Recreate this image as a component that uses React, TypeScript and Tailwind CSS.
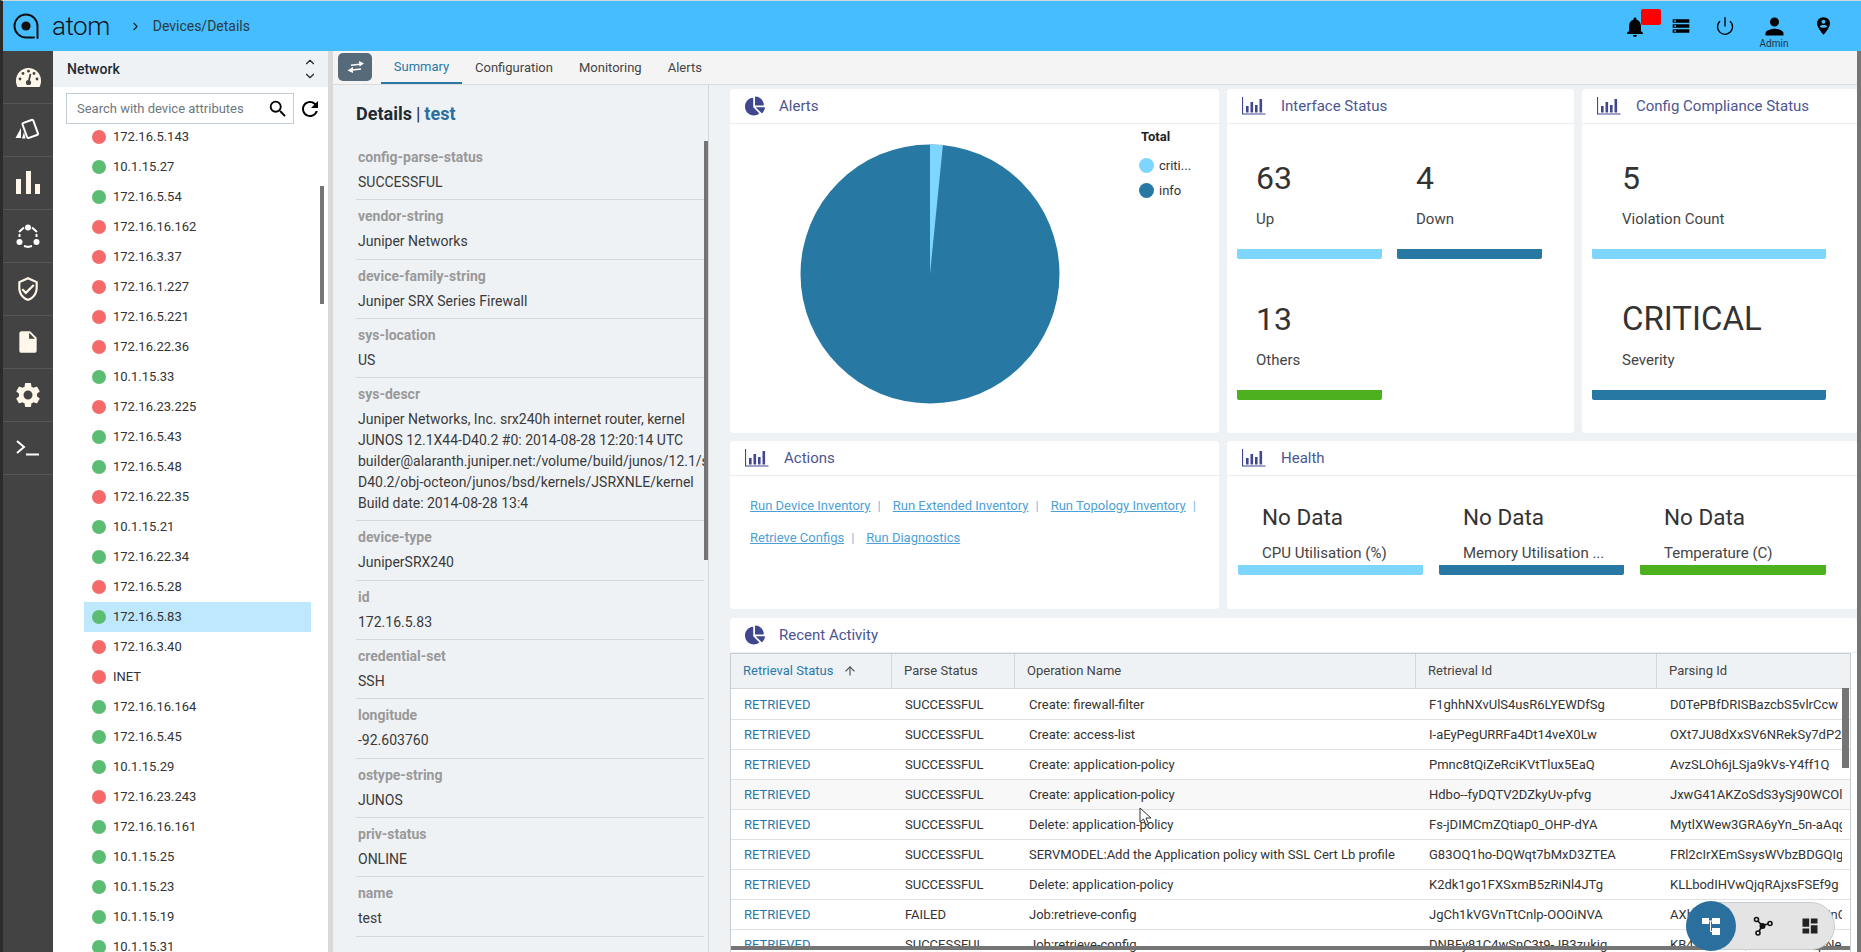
import React from 'react';
import { MdNotifications, MdStorage, MdPerson, MdSearch, MdRefresh, MdInsertDriveFile, MdSettings, MdOutlineVerifiedUser, MdDashboard } from 'react-icons/md';
import { FaChartPie } from 'react-icons/fa';
import { Power, ChevronUp, ChevronDown, ChevronRight, ArrowUp } from 'lucide-react';

const devices: [string, 'r' | 'g'][] = [
  ['172.16.5.143', 'r'], ['10.1.15.27', 'g'], ['172.16.5.54', 'g'], ['172.16.16.162', 'r'], ['172.16.3.37', 'r'],
  ['172.16.1.227', 'r'], ['172.16.5.221', 'r'], ['172.16.22.36', 'r'], ['10.1.15.33', 'g'], ['172.16.23.225', 'r'],
  ['172.16.5.43', 'g'], ['172.16.5.48', 'g'], ['172.16.22.35', 'r'], ['10.1.15.21', 'g'], ['172.16.22.34', 'g'],
  ['172.16.5.28', 'r'], ['172.16.5.83', 'g'], ['172.16.3.40', 'r'], ['INET', 'r'], ['172.16.16.164', 'g'],
  ['172.16.5.45', 'g'], ['10.1.15.29', 'g'], ['172.16.23.243', 'r'], ['172.16.16.161', 'g'], ['10.1.15.25', 'g'],
  ['10.1.15.23', 'g'], ['10.1.15.19', 'g'], ['10.1.15.31', 'g'],
];

const fields: [string, string[]][] = [
  ['config-parse-status', ['SUCCESSFUL']],
  ['vendor-string', ['Juniper Networks']],
  ['device-family-string', ['Juniper SRX Series Firewall']],
  ['sys-location', ['US']],
  ['sys-descr', [
    'Juniper Networks, Inc. srx240h internet router, kernel',
    'JUNOS 12.1X44-D40.2 #0: 2014-08-28 12:20:14 UTC',
    'builder@alaranth.juniper.net:/volume/build/junos/12.1/s',
    'D40.2/obj-octeon/junos/bsd/kernels/JSRXNLE/kernel',
    'Build date: 2014-08-28 13:4',
  ]],
  ['device-type', ['JuniperSRX240']],
  ['id', ['172.16.5.83']],
  ['credential-set', ['SSH']],
  ['longitude', ['-92.603760']],
  ['ostype-string', ['JUNOS']],
  ['priv-status', ['ONLINE']],
  ['name', ['test']],
];

const activity = [
  ['SUCCESSFUL', 'Create: firewall-filter', 'F1ghhNXvUlS4usR6LYEWDfSg', 'D0TePBfDRISBazcbS5vlrCcw'],
  ['SUCCESSFUL', 'Create: access-list', 'I-aEyPegURRFa4Dt14veX0Lw', 'OXt7JU8dXxSV6NRekSy7dP2Q'],
  ['SUCCESSFUL', 'Create: application-policy', 'Pmnc8tQiZeRciKVtTlux5EaQ', 'AvzSLOh6jLSja9kVs-Y4ff1Q'],
  ['SUCCESSFUL', 'Create: application-policy', 'Hdbo--fyDQTV2DZkyUv-pfvg', 'JxwG41AKZoSdS3ySj90WCOlA'],
  ['SUCCESSFUL', 'Delete: application-policy', 'Fs-jDIMCmZQtiap0_OHP-dYA', 'MytlXWew3GRA6yYn_5n-aAqg'],
  ['SUCCESSFUL', 'SERVMODEL:Add the Application policy with SSL Cert Lb profile', 'G83OQ1ho-DQWqt7bMxD3ZTEA', 'FRl2cIrXEmSsysWVbzBDGQIg'],
  ['SUCCESSFUL', 'Delete: application-policy', 'K2dk1go1FXSxmB5zRiNl4JTg', 'KLLbodIHVwQjqRAjxsFSEf9g'],
  ['FAILED', 'Job:retrieve-config', 'JgCh1kVGVnTtCnlp-OOOiNVA', 'AXbJk2mQwPz7YtRvLs0eHnQ'],
  ['SUCCESSFUL', 'Job:retrieve-config', 'DNBFy81C4wSnC3t9-JB3zukig', 'KB4sTfLm9QxVdA2oWcYpNeA'],
];

// atom logo mark
const Logo = () => (
  <svg width="28" height="28" viewBox="0 0 28 28" fill="none" stroke="#111" strokeWidth="2">
    <path d="M25.5 26V14A11.5 11.5 0 1 0 14 25.5h8" strokeLinecap="round" />
    <circle cx="14" cy="14" r="4.6" fill="#111" stroke="none" />
  </svg>
);

const GaugeIcon = () => (
  <svg width="25" height="19" viewBox="0 0 25 19">
    <path d="M12.5 0C5.6 0 0 5.6 0 12.5 0 15 .5 17 1.5 19H23.5C24.5 17 25 15 25 12.5 25 5.6 19.4 0 12.5 0Z" fill="#fff8ea" />
    <g fill="#434343">
      <circle cx="4" cy="11" r="1.4" />
      <circle cx="7" cy="5.5" r="1.4" />
      <circle cx="12.5" cy="3.2" r="1.4" />
      <circle cx="18" cy="5.5" r="1.4" />
      <circle cx="21" cy="11" r="1.4" />
      <circle cx="12.5" cy="14.5" r="2.6" />
    </g>
    <path d="M14.5 6 L12.5 14" stroke="#434343" strokeWidth="1.8" />
  </svg>
);

const CardsIcon = () => (
  <svg width="26" height="24" viewBox="0 0 26 24" fill="none">
    <path d="M0.5 20 L6 10 L6 20 Z" fill="#fff" />
    <path d="M7 20.5 L9 14 L10.5 20.5 Z" fill="#fff" />
    <rect x="9.5" y="3" width="11.5" height="16" rx="1.5" transform="rotate(-20 15 11)" fill="#434343" stroke="#fff" strokeWidth="2" />
  </svg>
);

const BarsIcon = () => (
  <svg width="24" height="24" viewBox="0 0 24 24" fill="#fff8ea">
    <rect x="0" y="8" width="5" height="15" />
    <rect x="10" y="0" width="5" height="23" />
    <rect x="19" y="13" width="5" height="10" />
  </svg>
);

const NodesIcon = () => (
  <svg width="24" height="24" viewBox="0 0 24 24" fill="#fff">
    <circle cx="12" cy="3.5" r="3" />
    <circle cx="3.5" cy="18" r="3" />
    <circle cx="20.5" cy="18" r="3" />
    <path d="M3 8 L8 3.5 M21 8 L16 3.5 M8 22 L12 23 L16 22 M3.5 10v3 M20.5 10v3" stroke="#fff" strokeWidth="2" fill="none" />
  </svg>
);

const TerminalIcon = () => (
  <svg width="24" height="18" viewBox="0 0 24 18" fill="none" stroke="#fff" strokeWidth="2">
    <path d="M1 2 L8 8 L1 14" />
    <path d="M10 15.5 H23" />
  </svg>
);

const ChartIcon = () => (
  <svg width="24" height="18" viewBox="0 0 24 18" fill="#3f478f">
    <path d="M0.5 0 V17 H23.5" fill="none" stroke="#3f478f" strokeWidth="1.2" />
    <rect x="4" y="9" width="2.6" height="6.5" />
    <rect x="8.5" y="5" width="2.6" height="10.5" />
    <rect x="13" y="8" width="2.6" height="7.5" />
    <rect x="17.5" y="2" width="2.6" height="13.5" />
  </svg>
);

const PieIcon = () => <FaChartPie className="text-[#3f478f]" size={20} />;

const PinIcon = () => (
  <svg width="13" height="18" viewBox="0 0 14 19">
    <path d="M7 0C3 0 0 3 0 6.8 0 11.5 7 19 7 19s7-7.5 7-12.2C14 3 11 0 7 0z" fill="#000" />
    <circle cx="7" cy="5" r="2.2" fill="#45bdff" />
    <path d="M3 10 C4 8 10 8 11 10 C10 12 4 12 3 10z" fill="#45bdff" />
  </svg>
);

const TreeIcon = () => (
  <svg width="18" height="17" viewBox="0 0 18 17" fill="#fff">
    <rect x="0" y="0" width="7" height="6" />
    <rect x="10" y="0" width="8" height="6" />
    <rect x="10" y="10" width="8" height="7" />
    <path d="M7 3h3M8.5 3v10.5H10" stroke="#fff" strokeWidth="1" fill="none" />
  </svg>
);

const GraphIcon = () => (
  <svg width="20" height="20" viewBox="0 0 20 20" fill="none" stroke="#111" strokeWidth="1.6">
    <circle cx="3.5" cy="3.5" r="2" />
    <circle cx="17" cy="7.5" r="2" />
    <circle cx="5" cy="17" r="2" />
    <path d="M5 5 L9 9.5 L15 8 M9 10 L6 15.5" />
    <circle cx="9.5" cy="10" r="3" fill="#111" stroke="none" />
  </svg>
);

const SwapIcon = () => (
  <svg width="17" height="12" viewBox="0 0 17 12" fill="#fff">
    <path d="M4 4.2 L13 3.2" stroke="#fff" strokeWidth="1.5" />
    <path d="M12 0 L17 2.5 L12.5 5.5Z" />
    <path d="M14 8 L5 9" stroke="#fff" strokeWidth="1.5" />
    <path d="M6 6 L0.5 9.5 L6 12Z" />
  </svg>
);

const navIcons = [<GaugeIcon />, <CardsIcon />, <BarsIcon />, <NodesIcon />,
  <MdOutlineVerifiedUser className="text-[#fff8ea]" size={26} />,
  <MdInsertDriveFile className="text-[#fff8ea]" size={26} />,
  <MdSettings className="text-[#fff8ea]" size={30} />,
  <TerminalIcon />];

const CardHead = ({ icon, title, pie }: { icon: React.ReactNode; title: string; pie?: boolean }) => (
  <div className={`h-[35px] flex items-center pl-[15px] border-b border-[#eceef1] text-[15px] text-[#4c5590] shrink-0 ${pie ? 'gap-[10px]' : 'gap-[15px]'}`}>
    <span className="w-[24px] flex justify-start">{icon}</span>
    <span>{title}</span>
  </div>
);

const Stat = ({ value, label, bar, big, indent }: { value: string; label: string; bar: string; big?: boolean; indent?: boolean }) => (
  <div className="flex flex-col">
    <div className={`h-[41px] flex items-center text-[#333] ${indent ? 'pl-[30px]' : 'pl-[19px]'} ${big ? 'text-[33px]' : 'text-[32px]'}`}>{value}</div>
    <div className={`mt-[11px] h-[21px] text-[15px] leading-[21px] text-[#444] ${indent ? 'pl-[30px]' : 'pl-[19px]'}`}>{label}</div>
    <div className={`mt-[19px] h-[10px] rounded-b-[2px] ${bar}`} />
  </div>
);

const Health = ({ label, bar }: { label: string; bar: string }) => (
  <div className="flex flex-col">
    <div className="pl-[24px] h-[32px] leading-[32px] mt-[1px] text-[22.5px] text-[#333]">No Data</div>
    <div className="pl-[24px] mt-[10px] h-[20px] leading-[20px] text-[15px] text-[#444] whitespace-nowrap overflow-hidden">{label}</div>
    <div className={`mt-[2px] h-[10px] rounded-b-[2px] ${bar}`} />
  </div>
);

const Link = ({ children, bar }: { children: string; bar?: boolean }) => (
  <span className="whitespace-nowrap">
    <span className="underline text-[#4e9fd6]">{children}</span>
    {bar && <span className="ml-[7px] mr-[12px] text-[#7fb8de]">|</span>}
  </span>
);

export default function App() {
  return (
    <div className="relative w-[1861px] h-[952px] overflow-hidden flex flex-col bg-[#eff2f5] font-['Roboto',sans-serif] text-[14px] text-[#333]">
      {/* top bar */}
      <header className="h-[51px] shrink-0 flex items-center bg-[#45bdff] border-t border-[#cfd8de] border-l-[3px] border-l-[#2c2a2a]">
        <div className="ml-[9px]"><Logo /></div>
        <span className="ml-[12px] text-[26px] leading-none tracking-[-0.5px] text-[#111] font-light">atom</span>
        <ChevronRight size={13} strokeWidth={2} className="ml-[19px] text-[#222]" />
        <span className="ml-[11px] text-[14px] text-[#2b3a44]">Devices/Details</span>
        <div className="ml-auto flex items-center pr-[31px]">
          <div className="relative w-[24px] mt-[1px]">
            <MdNotifications size={24} className="text-black" />
            <span className="absolute left-[18px] top-[-6px] w-[20px] h-[16px] rounded-[2px] bg-[#ff0000]" />
          </div>
          <MdStorage size={20} className="ml-[24px] text-black" />
          <Power size={20} strokeWidth={1.6} className="ml-[24px] text-black" />
          <div className="ml-[24px] w-[30px] flex flex-col items-center pt-[12px]">
            <MdPerson size={27} className="text-black -my-[2px]" />
            <span className="text-[10px] leading-[12px] text-[#1f3340]">Admin</span>
          </div>
          <div className="ml-[28px]"><PinIcon /></div>
        </div>
      </header>

      <div className="flex flex-1 min-h-0">
        {/* icon rail */}
        <nav className="w-[53px] shrink-0 bg-[#434343] border-l-[3px] border-[#2c2a2a] flex flex-col">
          {navIcons.map((ic, i) => (
            <div key={i} className="h-[53px] shrink-0 flex items-center justify-center border-b border-[#555]">{ic}</div>
          ))}
        </nav>

        {/* device tree */}
        <aside className="relative w-[275px] shrink-0 bg-white flex flex-col">
          <div className="h-[36px] shrink-0 bg-[#eff2f5] flex items-center pl-[14px] pr-[11px] text-[14px] font-medium text-[#1f2a33]">
            <span className="flex-1">Network</span>
            <span className="flex flex-col gap-[1px]">
              <ChevronUp size={14} className="-mb-[1px]" />
              <ChevronDown size={14} />
            </span>
          </div>
          <div className="flex items-center pl-[13px] pt-[6px]">
            <div className="w-[228px] h-[31px] border border-[#c3ccd3] flex items-center pl-[10px] pr-[4px] text-[13px] text-[#6d7780]">
              <span className="flex-1">Search with device attributes</span>
              <MdSearch size={22} className="text-black" />
            </div>
            <MdRefresh size={24} className="ml-[4px] text-black" />
          </div>
          <ul className="flex flex-col -mt-[2px]">
            {devices.map(([ip, st]) => (
              <li key={ip} className={`ml-[31px] mr-[17px] h-[30px] shrink-0 flex items-center pl-[8px] text-[13px] text-[#333] ${ip === '172.16.5.83' ? 'bg-[#bee8fd]' : ''}`}>
                <span className={`w-[14px] h-[14px] rounded-full ${st === 'r' ? 'bg-[#f46a6a]' : 'bg-[#5bbd72]'}`} />
                <span className="ml-[7px]">{ip}</span>
              </li>
            ))}
          </ul>
          <div className="absolute left-[267px] top-[135px] w-[4px] h-[118px] bg-[#757575]" />
        </aside>
        <div className="w-[5px] shrink-0 bg-[#d9d9d9]" />

        <main className="relative flex-1 min-w-0 flex flex-col">
          {/* tabs */}
          <div className="h-[34px] shrink-0 flex bg-[#f4f4f4] border-b border-[#dcdcdc] text-[13px] text-[#444]">
            <button className="ml-[5px] mt-[2px] w-[34px] h-[28px] rounded-[5px] bg-[#566a7a] flex items-center justify-center"><SwapIcon /></button>
            <span className="ml-[9px] w-[81px] flex items-center justify-center text-[#2a78a8] border-b-2 border-[#2a78a8]">Summary</span>
            <span className="ml-[13px] flex items-center">Configuration</span>
            <span className="ml-[26px] flex items-center">Monitoring</span>
            <span className="ml-[26px] flex items-center">Alerts</span>
          </div>

          <div className="flex-1 min-h-0 flex">
            {/* details */}
            <section className="relative w-[376px] shrink-0 overflow-hidden border-r border-[#d4d8dc] pl-[23px]">
              <h2 className="h-[56px] flex items-center text-[18px] font-bold text-[#1f2a33]">
                Details<span className="mx-[4px] font-normal">|</span><span className="text-[#2a6f9e] font-bold">test</span>
              </h2>
              {fields.map(([k, v]) => (
                <div key={k} className="w-[348px] pl-[2px] pt-[6px] pb-[6.3px] border-b border-[#d4d8dc]">
                  <div className="h-[21px] leading-[21px] font-bold text-[#999]">{k}</div>
                  <div className="mt-[4px] leading-[21px] text-[#3a3a3a] whitespace-nowrap overflow-hidden">
                    {v.map(l => <div key={l}>{l}</div>)}
                  </div>
                </div>
              ))}
              <div className="absolute left-[371px] top-[56px] w-[4px] h-[419px] bg-[#757575]" />
            </section>

            {/* cards */}
            <section className="relative flex-1 min-w-0 pl-[21px] pr-[4px] pt-[4px] flex flex-col gap-[8px]">
              <div className="grid grid-cols-[489px_347px_275px] gap-[8px] h-[344px] shrink-0">
                <div className="bg-white rounded-[4px] flex flex-col">
                  <CardHead icon={<PieIcon />} title="Alerts" pie />
                  <div className="flex-1 flex">
                    <div className="w-[400px] pl-[70px] pt-[20px]">
                      <svg width="260" height="260" viewBox="-130 -130 260 260">
                        <circle r="129.5" fill="#2878a4" />
                        <path d="M0 0 L0 -129.5 A129.5 129.5 0 0 1 12.9 -128.9 Z" fill="#7ed6fe" />
                      </svg>
                    </div>
                    <div className="pl-[9px] pt-[4px]">
                      <div className="font-bold text-[#222] text-[13px] leading-[18px] pl-[2px]">Total</div>
                      <div className="flex items-center gap-[5px] mt-[12px] h-[15px] text-[13px] text-[#333]">
                        <span className="w-[15px] h-[15px] rounded-full bg-[#7ed6fe]" />criti...
                      </div>
                      <div className="flex items-center gap-[5px] mt-[10px] h-[15px] text-[13px] text-[#333]">
                        <span className="w-[15px] h-[15px] rounded-full bg-[#2878a4]" />info
                      </div>
                    </div>
                  </div>
                </div>
                <div className="bg-white rounded-[4px] flex flex-col">
                  <CardHead icon={<ChartIcon />} title="Interface Status" />
                  <div className="grid grid-cols-[145px_145px] gap-x-[15px] gap-y-[39px] pl-[10px] pt-[33px]">
                    <Stat value="63" label="Up" bar="bg-[#7ed6fe]" />
                    <Stat value="4" label="Down" bar="bg-[#2878a4]" />
                    <Stat value="13" label="Others" bar="bg-[#4cb01f]" />
                  </div>
                </div>
                <div className="bg-white rounded-[4px] flex flex-col">
                  <CardHead icon={<ChartIcon />} title="Config Compliance Status" />
                  <div className="flex flex-col gap-y-[39px] pl-[10px] pr-[31px] pt-[33px]">
                    <Stat value="5" label="Violation Count" bar="bg-[#7ed6fe]" indent />
                    <Stat value="CRITICAL" label="Severity" bar="bg-[#2878a4]" big indent />
                  </div>
                </div>
              </div>

              <div className="grid grid-cols-[489px_631px] gap-[8px] h-[168px] shrink-0">
                <div className="bg-white rounded-[4px] flex flex-col">
                  <CardHead icon={<ChartIcon />} title="Actions" />
                  <div className="pl-[20px] pr-[8px] pt-[14px] text-[13px] leading-[32px]">
                    <Link bar>Run Device Inventory</Link>
                    <Link bar>Run Extended Inventory</Link>
                    <Link bar>Run Topology Inventory</Link>
                    <br />
                    <Link bar>Retrieve Configs</Link>
                    <Link>Run Diagnostics</Link>
                  </div>
                </div>
                <div className="bg-white rounded-[4px] flex flex-col">
                  <CardHead icon={<ChartIcon />} title="Health" />
                  <div className="grid grid-cols-[185px_185px_186px] gap-x-[16px] pl-[11px] pt-[24px]">
                    <Health label="CPU Utilisation (%)" bar="bg-[#7ed6fe]" />
                    <Health label="Memory Utilisation ..." bar="bg-[#2878a4]" />
                    <Health label="Temperature (C)" bar="bg-[#4cb01f]" />
                  </div>
                </div>
              </div>

              <div className="flex-1 min-h-0 mt-px bg-white rounded-t-[4px] flex flex-col relative">
                <CardHead icon={<PieIcon />} title="Recent Activity" pie />
                <div className="w-[1121px] flex-1 min-h-0 border-l border-r border-t border-[#c8cdd1] overflow-hidden text-[13px]">
                  <div className="grid grid-cols-[161px_123px_401px_241px_1fr] h-[35px] bg-[#eff2f5] border-b border-[#d4d8dc] text-[#444]">
                    <div className="flex items-center pl-[12px] text-[#2a78a8] border-r border-[#d4d8dc]">Retrieval Status<ArrowUp size={14} className="ml-[10px] text-[#555]" /></div>
                    <div className="flex items-center pl-[12px] border-r border-[#d4d8dc]">Parse Status</div>
                    <div className="flex items-center pl-[12px] border-r border-[#d4d8dc]">Operation Name</div>
                    <div className="flex items-center pl-[12px] border-r border-[#d4d8dc]">Retrieval Id</div>
                    <div className="flex items-center pl-[12px]">Parsing Id</div>
                  </div>
                  <div className="pt-px">
                    {activity.map((r, i) => (
                      <div key={i} className={`grid grid-cols-[161px_123px_401px_241px_185px] h-[30px] items-center border-b border-[#dfe2e5] ${i === 3 ? 'bg-[#f8f8f8]' : ''}`}>
                        <div className="pl-[13px] text-[#2a78a8]">RETRIEVED</div>
                        <div className="pl-[13px]">{r[0]}</div>
                        <div className="pl-[14px] whitespace-nowrap">{r[1]}</div>
                        <div className="pl-[13px] whitespace-nowrap">{r[2]}</div>
                        <div className="pl-[13px] whitespace-nowrap overflow-hidden">{r[3]}</div>
                      </div>
                    ))}
                  </div>
                </div>
                {/* table scrollbars */}
                <div className="absolute left-[1112px] top-[70px] w-[7px] h-[80px] bg-[#757575]" />
                <div className="absolute left-[1px] bottom-[2px] w-[1119px] h-[4px] bg-[#757575]" />
              </div>

              {/* mouse cursor */}
              <svg className="absolute left-[430px] top-[722px]" width="13" height="19" viewBox="0 0 13 19">
                <path d="M1 1 V15 L4.5 12 L7 18 L9.5 17 L7 11 H12 Z" fill="#fff" stroke="#333" strokeWidth="1" />
              </svg>
            </section>
          </div>
          <div className="absolute right-0 top-0 bottom-0 w-[4px] bg-[#757575]" />
        </main>
      </div>

      {/* view switcher */}
      <div className="absolute left-[1686px] top-[902px] w-[149px] h-[48px] rounded-full bg-[#e4e4e4] border border-[#c9ced2] flex items-center">
        <span className="w-[50px] h-[50px] -ml-px rounded-full bg-[#2a6f9e] flex items-center justify-center"><TreeIcon /></span>
        <span className="ml-[17px]"><GraphIcon /></span>
        <MdDashboard size={20} className="ml-[27px] text-[#222]" />
      </div>
    </div>
  );
}
